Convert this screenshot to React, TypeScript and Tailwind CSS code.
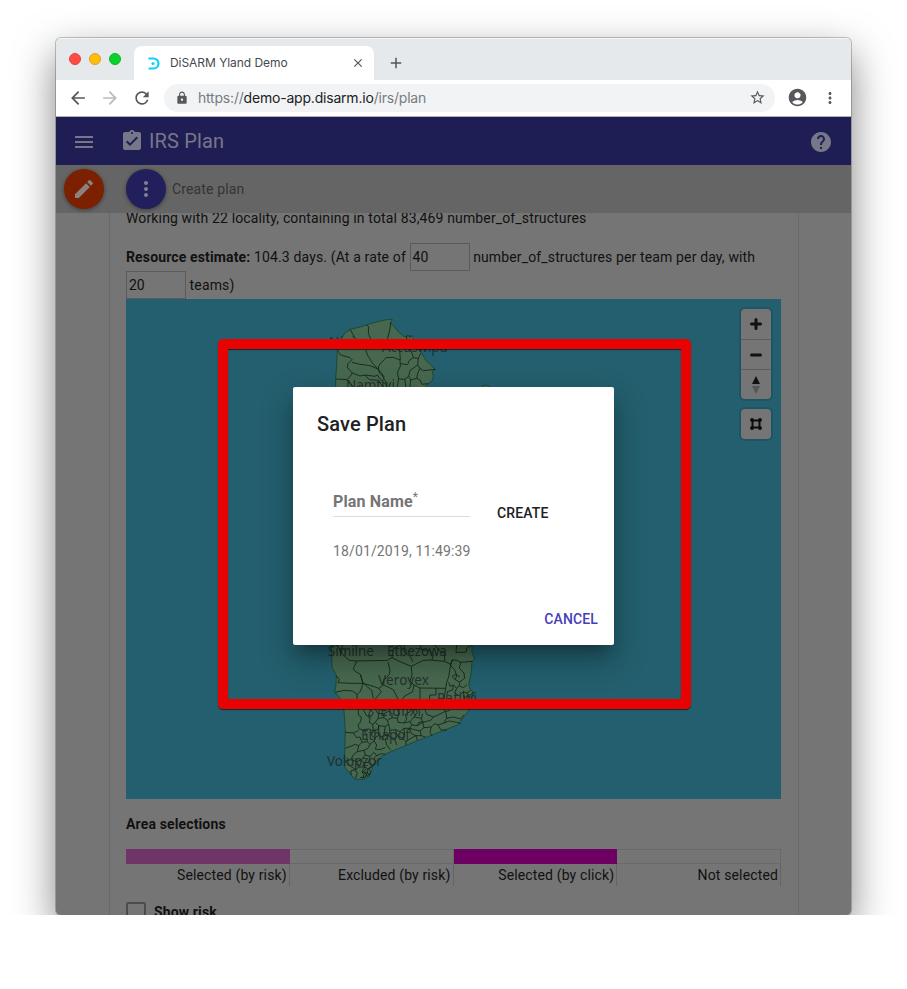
import React from "react";
import {
  MdArrowBack,
  MdArrowForward,
  MdRefresh,
  MdLock,
  MdStarBorder,
  MdAccountCircle,
  MdMoreVert,
  MdMenu,
  MdAssignmentTurnedIn,
  MdHelp,
  MdEdit,
  MdClose,
  MdAdd,
} from "react-icons/md";

const northLines = [
  "121,73 128,88 137,103",
  "170,60 176,66 175,85 182,102",
  "242,52 240,72 232,103",
  "84,138 92,150 120,158 126,164 114,176 112,188 127,204 120,215 110,224 77,222",
  "126,172 150,178 180,182 204,192 208,180 228,158 250,157 270,165 271,184 262,202 266,222 262,246",
  "167,133 172,150 188,175 204,192 216,206 222,222 232,235 229,246",
  "127,204 150,213 165,210 195,214 202,210 212,224 224,236",
  "165,210 178,224 206,226 218,246",
  "204,192 210,206 224,216",
  "269,135 271,165",
  "271,176 293,179 298,166 310,158 325,160 332,145",
  "325,160 323,180 330,190 340,197 376,193",
  "323,180 300,197 296,214 302,225 320,220 330,225 336,238 355,236",
  "266,222 284,223 296,214",
  "320,220 323,205 330,190",
  "284,223 288,246",
  "302,225 300,246",
  "300,133 306,145 310,158",
  "290,92 290,103 M300,90 300,98",
  "110,224 130,246",
];

const southLines = [
  "64,30 82,30 94,55 118,76 140,78 232,76 246,68 250,42 270,30",
  "94,55 97,30",
  "140,78 130,102 134,108 151,118 159,145 152,168 140,180 142,192",
  "79,122 88,134 84,143 127,145 159,145",
  "76,172 102,166 127,168 142,178",
  "151,118 159,145 190,154 206,160 214,170 196,192",
  "160,145 185,166 190,190",
  "206,160 221,150 238,158 250,164 264,192",
  "221,150 222,135 238,119 240,105 234,82",
  "246,68 270,80 304,94 340,76 360,75 404,79 422,88 427,74 440,76 452,82 486,79",
  "304,94 306,120 300,138 312,150 330,159 407,160 410,142 416,126 422,88",
  "312,150 308,170 283,184 278,192",
  "330,159 330,192",
  "378,160 378,180 360,180 358,192",
  "407,160 402,192",
  "283,30 282,50 302,66 308,80",
  "330,30 336,45 358,46 370,60 366,75",
  "440,30 438,52 468,52 470,40 485,30",
  "374,30 390,48 404,56 404,79",
  "427,74 422,92 434,104 440,122 436,134 450,142 447,152 440,160 430,150 420,154 416,142",
  "452,82 448,100 462,114 464,130 450,140",
  "436,134 426,124 438,118 450,126",
  "440,160 434,174 448,182 460,170 470,174 482,166",
  "430,150 428,165 412,170 410,192",
  "447,152 460,158 470,150",
  "460,170 464,192",
  "145,223 145,240 154,246 152,260 144,270 148,282 162,286 170,298",
  "105,292 130,294 146,286",
  "160,223 168,240 180,250 178,262 188,268 196,262 206,272 204,284 190,288 176,282 160,284",
  "180,250 176,240 182,223",
  "188,268 190,288 184,300 194,308 206,302 216,306 218,316",
  "196,262 204,250 222,248 232,256 236,268 226,274 206,272",
  "204,250 208,223",
  "232,256 246,248 262,250 264,262 282,264 300,260 306,270 298,280 282,280 270,290 256,284 240,286 236,268",
  "262,250 268,236 262,223",
  "282,264 290,252 286,238 300,230 302,223",
  "300,260 312,246 334,250 338,262 362,256 370,246 388,238 404,230 420,226",
  "306,270 322,272 338,262 342,278 330,288 314,284 298,280",
  "342,278 364,276 374,266 384,270 402,264 410,250 408,234 402,223",
  "312,246 322,232 318,223",
  "338,236 334,250 M345,223 350,238 370,246",
  "364,276 360,292 366,302 M384,270 392,284 410,286",
  "402,264 418,258 440,262 452,266",
  "410,250 430,246 452,252 462,240",
  "330,288 334,302 346,306",
  "282,280 284,300 278,310 288,320 288,330",
  "298,280 304,296 318,302 322,316",
  "256,284 262,302 254,312 260,330",
  "240,286 236,302 226,314 230,330 242,346",
  "262,302 278,310 M254,312 236,302 222,298 216,306",
  "288,320 306,308 318,302 334,302",
  "226,274 222,298 M206,272 206,302",
  "130,294 140,308 150,306 156,322 146,332 136,328 122,334 106,340",
  "146,332 142,350 130,360 122,374 106,378",
  "156,322 172,320 180,328 174,340 162,346 142,350",
  "180,328 192,318 200,330 196,342 210,344 226,338",
  "194,308 192,318 M170,298 172,320",
  "162,346 166,360 180,364 192,352 200,362 214,356 226,358",
  "166,360 154,374 162,384 176,382 180,364",
  "176,382 188,390 198,382 192,370 200,362",
  "154,374 140,380 122,374",
  "140,380 148,396 136,404 142,416 136,430",
  "162,384 164,396 148,396 M164,396 174,402 186,396 188,390",
  "164,396 156,410 162,420 158,432",
  "174,402 172,414 180,420 M156,410 172,414 166,426 150,428",
  "106,378 120,392 136,404 122,408 124,420",
  "168,402 162,410 172,424 182,412 176,400 184,394",
  "180,223 190,234 184,244 176,240 M196,223 204,236 222,236 222,248",
  "222,236 238,228 246,236 246,248 M340,260 326,262 322,272",
];

const labels = [
  { t: "Nivi", x: 329, y: 347, w: 26 },
  { t: "Accuswipu", x: 382, y: 352, w: 66 },
  { t: "Namtivi", x: 346, y: 390, w: 49 },
  { t: "Similne", x: 328, y: 656, w: 46 },
  { t: "Etbezowa", x: 387, y: 656, w: 60 },
  { t: "Veroyex", x: 378, y: 685, w: 51 },
  { t: "Patiwi", x: 437, y: 703, w: 40 },
  { t: "Elolixi", x: 380, y: 716, w: 41 },
  { t: "Ethapof", x: 361, y: 740, w: 49 },
  { t: "Volupzor", x: 327, y: 766, w: 55 },
];

const toPath = (s: string) => (s.startsWith("M") ? s : "M" + s);

function RegionMap() {
  return (
    <svg width="655" height="500" viewBox="126 299 655 500" className="block">
      <g transform="translate(310 305) scale(.33333)" stroke="#102218" strokeWidth="2.5" strokeLinejoin="round" fill="none">
        <path
          fill="#47684f"
          stroke="#14452f"
          d="M77,260 77,222 80,180 82,138 90,110 104,84 121,73 150,66 170,60 184,55 207,49 230,44 247,43 242,55 254,66 266,81 280,93 290,96 292,90 300,96 308,92 310,102 316,120 335,145 348,166 360,178 376,193 366,200 370,212 368,225 355,236 345,246 345,260Z"
        />
        {northLines.map((p, i) => (
          <path key={i} d={toPath(p)} />
        ))}
        <path fill="#47684f" stroke="#14452f" d="M518,242 530,240 538,246 524,250Z" />
      </g>
      <g transform="translate(310 635) scale(.33333)" stroke="#102218" strokeWidth="2.5" strokeLinejoin="round" fill="none">
        <path
          fill="#47684f"
          stroke="#14452f"
          d="M64,10 66,96 79,122 78,150 74,172 88,186 102,226 106,292 104,345 105,398 134,432 158,434 178,424 187,400 192,386 218,362 242,350 330,314 442,270 476,228 478,190 494,176 482,164 476,150 484,110 486,80 494,72 486,52 486,10Z"
        />
        {southLines.map((p, i) => (
          <path key={i} d={toPath(p)} />
        ))}
        <path d="M470,174 478,186 488,172 490,184 M466,186 480,178" />
      </g>
      {labels.map((l) => (
        <text
          key={l.t}
          x={l.x}
          y={l.y}
          textLength={l.w}
          fontSize="13.5"
          fill="#202a29"
          fillOpacity=".9"
          className="font-['Noto_Sans',sans-serif]"
        >
          {l.t}
        </text>
      ))}
    </svg>
  );
}

function BrowserChrome() {
  return (
    <div className="h-[79px] shrink-0 border-b border-[#b2b2b2] bg-white">
      <div className="flex h-[42px] items-end border-t border-[#f4f6f7] bg-[#e5e9ec]">
        <div className="flex h-[41px] w-[78px] items-center gap-2 pb-[2px] pl-[13px]">
          <i className="size-3 rounded-full border border-[#e0443e] bg-[#ff4a45]" />
          <i className="size-3 rounded-full border border-[#dea123] bg-[#ffbd05]" />
          <i className="size-3 rounded-full border border-[#14ae2b] bg-[#05d42c]" />
        </div>
        <div className="flex h-[34px] w-[240px] items-center rounded-t-lg bg-white pl-[14px] pr-[9px]">
          <svg width="12" height="13" viewBox="0 0 12 13" className="shrink-0" fill="none" stroke="#10cdf9" strokeWidth="2.2">
            <path d="M.5 1.5H5.5A5 5 0 0 1 5.5 11.5H.5" />
            <circle cx="5" cy="6.5" r="1.5" fill="#10cdf9" stroke="none" />
          </svg>
          <span className="ml-[10px] flex-1 font-['Inter',sans-serif] text-[12px] tracking-[-0.05px] text-[#45494d]">DiSARM Yland Demo</span>
          <MdClose size={14} color="#50555a" />
        </div>
        <div className="flex h-[34px] items-center pl-[13px]">
          <MdAdd size={18} color="#50555a" />
        </div>
      </div>
      <div className="flex h-9 items-center pb-px pl-[13px] text-[#55595e]">
        <MdArrowBack size={18} className="scale-115" />
        <MdArrowForward size={18} className="ml-[14px] scale-115 text-[#b9bbbe]" />
        <MdRefresh size={20} className="ml-[13px]" />
        <div className="ml-3 flex h-7 w-[611px] items-center rounded-full bg-[#f1f3f4] pl-[11px] pr-[9px]">
          <MdLock size={14} />
          <span className="ml-[9px] flex-1 font-['Inter',sans-serif] text-[14px] tracking-[-0.2px] text-[#777c82]">
            https://<span className="text-[#202124]">demo-app.disarm.io</span>/irs/plan
          </span>
          <MdStarBorder size={17} />
        </div>
        <MdAccountCircle size={21} className="ml-3" />
        <MdMoreVert size={18} className="ml-[13px]" />
      </div>
    </div>
  );
}

function LegendCell({ color, label }: { color: string; label: string }) {
  return (
    <div className="min-w-0 flex-1">
      <div className={`h-[15px] border border-l-0 ${color}`} />
      <div className="h-[22px] border-r border-[#646464] pr-[2px] pt-px text-right leading-5">{label}</div>
    </div>
  );
}

function NumberBox({ value }: { value: string }) {
  return (
    <span className="inline-block h-7 w-[60px] border border-[#5b5b5b] pl-[2px] align-baseline leading-[26px] tracking-normal">{value}</span>
  );
}

export default function App() {
  return (
    <div className="relative h-[989px] w-[907px] overflow-hidden bg-white font-['Roboto',sans-serif] text-[14px] tracking-[0.14px] text-[#111]">
      <div className="h-[915px] overflow-hidden pl-[56px] pt-[38px]">
        <div className="flex h-[877px] w-[795px] flex-col overflow-hidden rounded-[5px] bg-[#757575] shadow-[0_0_0_1px_rgba(0,0,0,0.22),0_16px_40px_rgba(0,0,0,0.5)]">
          <BrowserChrome />
          <header className="flex h-12 shrink-0 items-center bg-[#1f1e54] pl-4 pr-[18px] text-[#77778a]">
            <MdMenu size={24} className="mt-[2px]" />
            <MdAssignmentTurnedIn size={24} className="ml-6" />
            <h1 className="ml-[5px] flex-1 text-[20px]">IRS Plan</h1>
            <MdHelp size={24} className="mt-[2px]" />
          </header>
          <div className="relative flex h-12 shrink-0 items-center bg-[#656565] pl-2 text-[#343434]">
            <span className="flex size-10 items-center justify-center rounded-full bg-[#7b2102] text-[#8b827f] shadow-[0_1px_4px_rgba(0,0,0,0.4)]">
              <MdEdit size={24} />
            </span>
            <span className="ml-[22px] flex size-10 items-center justify-center rounded-full bg-[#22205c] text-[#80808f] shadow-[0_1px_4px_rgba(0,0,0,0.4)]">
              <MdMoreVert size={24} />
            </span>
            <span className="ml-[6px]">Create plan</span>
          </div>
          <main className="ml-[53px] w-[690px] flex-1 overflow-hidden border-x border-[#696969] px-4">
            <p className="-mt-[5px] h-5 leading-5">Working with 22 locality, containing in total 83,469 number_of_structures</p>
            <p className="mt-[15px] h-14 leading-7">
              <b>Resource estimate:</b> 104.3 days. (At a rate of <NumberBox value="40" /> number_of_structures per team per day, with <NumberBox value="20" /> teams)
            </p>
            <section className="relative h-[500px] w-[655px] overflow-hidden bg-[#235f6e]">
              <RegionMap />
              <div className="absolute right-[10px] top-[10px] flex flex-col gap-[10px]">
                <div className="flex h-[90px] w-[30px] flex-col rounded bg-[#757575] shadow-[0_0_0_2px_rgba(0,0,0,0.1)]">
                  <span className="flex h-[31px] items-center justify-center border-b border-[#5e5e5e]">
                    <svg width="12" height="12" stroke="#111" strokeWidth="3" strokeLinecap="round"><path d="M1.5 6H10.5M6 1.5V10.5" /></svg>
                  </span>
                  <span className="flex h-[30px] items-center justify-center border-b border-[#5e5e5e]">
                    <svg width="12" height="4" stroke="#111" strokeWidth="3" strokeLinecap="round"><path d="M1.5 2H10.5" /></svg>
                  </span>
                  <span className="flex flex-1 items-center justify-center">
                    <svg width="8" height="18"><path fill="#111" d="M4 0 8 8H0Z" /><path fill="#565656" d="M0 10H8L4 18Z" /></svg>
                  </span>
                </div>
                <div className="flex size-[30px] items-center justify-center rounded bg-[#757575] shadow-[0_0_0_2px_rgba(0,0,0,0.1)]">
                  <svg width="12" height="12" fill="#0c0c0c">
                    <path fill="none" stroke="#0c0c0c" strokeWidth="2" d="M2.5 2.5H9.5V9.5H2.5Z" />
                    <circle cx="2" cy="2" r="1.9" /><circle cx="10" cy="2" r="1.9" /><circle cx="2" cy="10" r="1.9" /><circle cx="10" cy="10" r="1.9" />
                  </svg>
                </div>
              </div>
            </section>
            <h2 className="mt-[15px] h-5 font-bold leading-5">Area selections</h2>
            <div className="mt-[15px] flex w-[655px]">
              <LegendCell color="border-[#6f3468] bg-[#6f3468]" label="Selected (by risk)" />
              <LegendCell color="border-[#696969]" label="Excluded (by risk)" />
              <LegendCell color="border-[#6e0064] bg-[#6e0064]" label="Selected (by click)" />
              <LegendCell color="border-[#696969]" label="Not selected" />
            </div>
            <label className="mt-4 flex">
              <i className="size-5 rounded-[2px] border-2 border-[#4c4c4c]" />
              <b className="ml-2 leading-5">Show risk</b>
            </label>
          </main>
        </div>
      </div>
      <div className="absolute left-[218px] top-[339px] h-[370px] w-[473px] rounded-[5px] border-[10px] border-[#e90202] shadow-[0_1px_1px_rgba(0,0,0,0.6),inset_0_1px_1px_rgba(0,0,0,0.6)]" />
      <div className="absolute left-[293px] top-[387px] flex h-[258px] w-[321px] flex-col rounded-[2px] bg-white shadow-[0_11px_15px_-7px_rgba(0,0,0,0.3),0_14px_30px_3px_rgba(0,0,0,0.25)]">
        <h2 className="ml-6 mt-[21px] h-8 text-[20px] font-medium leading-8 text-[#212121]">Save Plan</h2>
        <div className="ml-10 mt-[50px] flex items-start">
          <div className="w-[137px]">
            <div className="h-[27px] border-b border-[#dcdcdc] text-[16px] font-bold leading-6 text-[#757575]">
              Plan Name<sup className="text-[12px] font-normal">*</sup>
            </div>
            <div className="mt-[24px] whitespace-nowrap leading-5 text-[#757575]">18/01/2019, 11:49:39</div>
          </div>
          <span className="ml-[27px] mt-[13px] font-medium leading-5 text-[#212121]">CREATE</span>
        </div>
        <span className="mb-4 mr-4 mt-auto self-end font-medium leading-5 text-[#4540b8]">CANCEL</span>
      </div>
    </div>
  );
}
